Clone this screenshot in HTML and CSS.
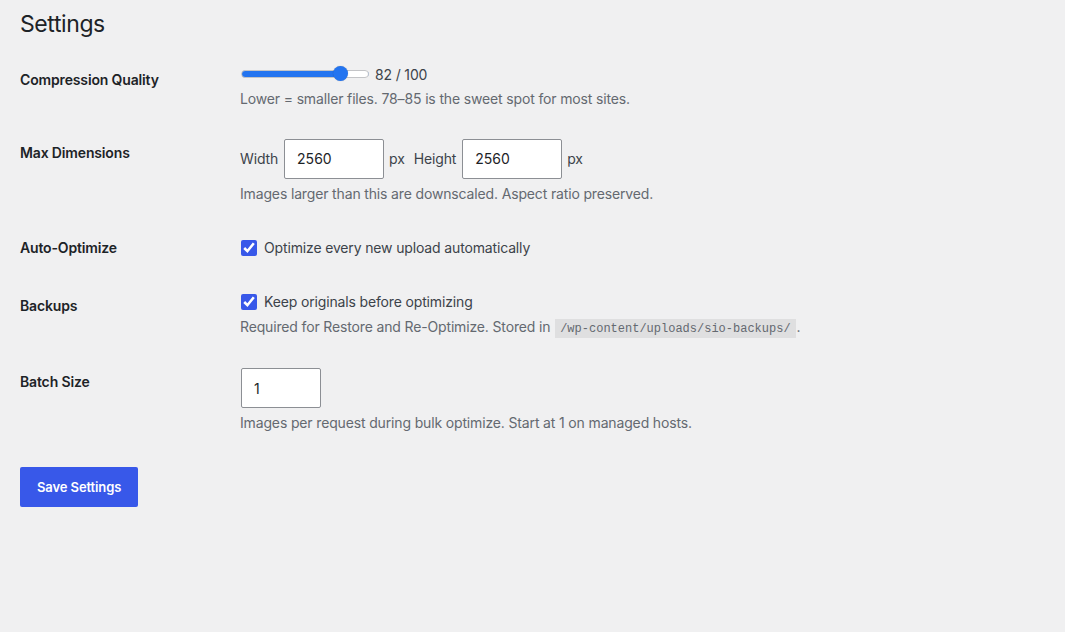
FILE: index.html
```html
<!DOCTYPE html>
<html lang="en">
<head>
    <meta charset="UTF-8">
    <meta name="viewport" content="width=device-width, initial-scale=1.0">
    <title>Settings</title>
    <link rel="stylesheet" href="styles.css">
</head>
<body>
    <div class="wrap">
        <h1>Settings</h1>

        <form class="settings-form" onsubmit="return false;">
            <table class="form-table">
                <tr>
                    <th>Compression Quality</th>
                    <td>
                        <div class="range-row">
                            <input type="range" class="quality-range" min="1" max="100" value="82" style="--fill: 82%">
                            <span class="range-value">82 / 100</span>
                        </div>
                        <p class="description">Lower = smaller files. 78–85 is the sweet spot for most sites.</p>
                    </td>
                </tr>
                <tr>
                    <th>Max Dimensions</th>
                    <td>
                        <div class="dims-row">
                            <span>Width</span>
                            <input type="text" class="text-input dim-input" value="2560">
                            <span class="unit">px</span>
                            <span>Height</span>
                            <input type="text" class="text-input dim-input" value="2560">
                            <span>px</span>
                        </div>
                        <p class="description">Images larger than this are downscaled. Aspect ratio preserved.</p>
                    </td>
                </tr>
                <tr>
                    <th>Auto-Optimize</th>
                    <td>
                        <label class="check-row">
                            <input type="checkbox" checked>
                            Optimize every new upload automatically
                        </label>
                    </td>
                </tr>
                <tr>
                    <th>Backups</th>
                    <td>
                        <label class="check-row">
                            <input type="checkbox" checked>
                            Keep originals before optimizing
                        </label>
                        <p class="description">Required for Restore and Re-Optimize. Stored in <code>/wp-content/uploads/sio-backups/</code>.</p>
                    </td>
                </tr>
                <tr>
                    <th>Batch Size</th>
                    <td>
                        <input type="text" class="text-input batch-input" value="1">
                        <p class="description">Images per request during bulk optimize. Start at 1 on managed hosts.</p>
                    </td>
                </tr>
            </table>

            <p class="submit">
                <button type="submit" class="button-primary">Save Settings</button>
            </p>
        </form>
    </div>
</body>
</html>
```

FILE: styles.css
```css
* {
    box-sizing: border-box;
}
html, body {
    margin: 0;
    padding: 0;
    min-height: 100%;
}
body {
    background-color: #f0f0f1;
    color: #1d2327;
    font-family: Inter, "Liberation Sans", sans-serif;
    font-size: 14px;
    line-height: 1.4;
    letter-spacing: -0.15px;
}
.wrap {
    padding: 0 20px;
}
.wrap h1 {
    font-size: 23px;
    font-weight: 400;
    line-height: 1.3;
    margin: 0;
    padding: 10px 0 4px;
    letter-spacing: -0.4px;
}

.form-table {
    border-collapse: collapse;
    margin-top: 7px;
    width: 100%;
}
.form-table th {
    box-sizing: content-box;
    width: 200px;
    padding: 20px 10px 20px 0;
    text-align: left;
    vertical-align: top;
    font-weight: 600;
    line-height: 1.3;
}
.form-table td {
    padding: 15px 10px;
    vertical-align: middle;
    line-height: 1.3;
}
.description {
    margin: 4px 0 0;
    color: #646970;
    line-height: 1.5;
}
code {
    font-family: "Liberation Mono", monospace;
    font-size: 12px;
    letter-spacing: 0;
    background: rgba(0, 0, 0, 0.07);
    padding: 3px 5px 2px;
    margin: 0 1px;
}

/* quality slider */
.range-row {
    display: flex;
    align-items: center;
    gap: 6px;
    height: 18px;
}
.quality-range {
    -webkit-appearance: none;
    appearance: none;
    width: 128px;
    height: 8px;
    margin: 0 0 0 1px;
    border: 1px solid #c3c4c7;
    border-radius: 4px;
    background: linear-gradient(to right, #2374f0 var(--fill), #fff var(--fill));
    position: relative;
    top: -1px;
}
.quality-range::-webkit-slider-thumb {
    -webkit-appearance: none;
    width: 15px;
    height: 15px;
    border-radius: 50%;
    background: #2374f0;
    border: none;
    box-shadow: 0 0 1px rgba(0, 0, 0, 0.3);
}
.range-value {
    color: #3c434a;
}

/* text inputs */
.dims-row {
    display: flex;
    align-items: center;
    color: #3c434a;
}
.text-input {
    height: 40px;
    padding: 0 12px;
    border: 1px solid #8c8f94;
    border-radius: 2px;
    background: #fff;
    color: #1d2327;
    font-family: inherit;
    font-size: 14px;
}
.dim-input {
    width: 100px;
    margin: 0 5px 0 6px;
}
.dims-row .unit {
    margin-right: 9px;
}
.batch-input {
    width: 80px;
    margin-left: 1px;
}

/* checkboxes */
.check-row {
    display: flex;
    align-items: center;
    gap: 7px;
    min-height: 20px;
    color: #3c434a;
}
.check-row input {
    width: 16px;
    height: 16px;
    margin: 0 0 0 1px;
    accent-color: #3858e9;
}

.submit {
    margin: 19px 0 0;
}
.button-primary {
    height: 40px;
    padding: 0 17px;
    border: none;
    border-radius: 2px;
    background: #3858e9;
    color: #fff;
    font-family: inherit;
    font-size: 13px;
    font-weight: 600;
    letter-spacing: -0.1px;
    cursor: pointer;
}
```
